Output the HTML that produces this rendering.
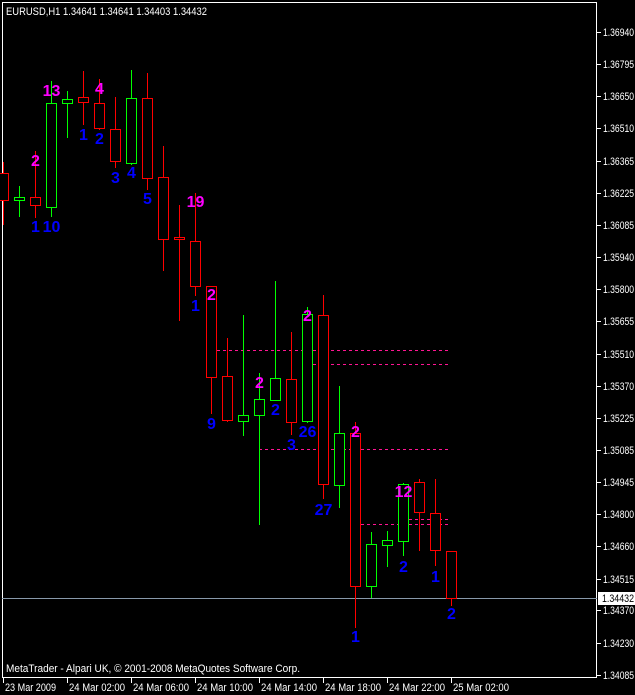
<!DOCTYPE html><html><head><style>body{margin:0;background:#000}svg{display:block}</style></head><body>
<svg width="635" height="695" xmlns="http://www.w3.org/2000/svg" font-family="Liberation Sans, sans-serif">
<rect width="635" height="695" fill="#000"/>
<rect x="2.5" y="2.5" width="594" height="675" fill="none" stroke="#fff"/>
<text x="6" y="15" fill="#fff" font-size="11" textLength="201" lengthAdjust="spacingAndGlyphs">EURUSD,H1  1.34641 1.34641 1.34403 1.34432</text>
<g stroke="#ff1493" stroke-dasharray="3,3" stroke-width="1">
<line x1="211" y1="350.5" x2="448" y2="350.5"/><line x1="307" y1="364.5" x2="448" y2="364.5"/>
<line x1="259" y1="449.5" x2="448" y2="449.5"/><line x1="403" y1="519.5" x2="448" y2="519.5"/>
<line x1="355" y1="524.5" x2="448" y2="524.5"/></g>
<line x1="2" y1="598.5" x2="597" y2="598.5" stroke="#8899aa"/>
<g fill="none" stroke-width="1" id="c"></g>
<g font-size="11" fill="#fff" id="ax"></g>
<g font-weight="bold" font-size="16" text-anchor="middle" id="lb"></g>
<rect x="598" y="592" width="37" height="13" fill="#fff"/>
<text x="602" y="602" font-size="11" fill="#000" textLength="32" lengthAdjust="spacingAndGlyphs">1.34432</text>
<text x="6" y="672" font-size="11" fill="#fff" textLength="294" lengthAdjust="spacingAndGlyphs">MetaTrader - Alpari UK, © 2001-2008 MetaQuotes Software Corp.</text>
<script>
var ns="http://www.w3.org/2000/svg";
function el(p,t,a,txt){var e=document.createElementNS(ns,t);for(var k in a)e.setAttribute(k,a[k]);if(txt)e.textContent=txt;p.appendChild(e);}
var c=document.getElementById('c');
var d=[[3,'r',173,200,162,225],[19,'g',197,200,186,217],[35,'r',197,205,151,218],[51,'g',103,207,81,217],[67,'g',99,103,91,138],[83,'r',97,102,71,125],[99,'r',103,128,79,130],[115,'r',129,161,97,168],[131,'g',98,163,70,165],[147,'r',98,178,73,190],[163,'r',177,239,146,271],[179,'r',237,239,205,321],[195,'r',241,286,193,296],[211,'r',286,377,286,414],[227,'r',376,420,338,422],[243,'g',415,421,315,436],[259,'g',399,415,373,525],[275,'g',378,400,281,400],[291,'r',379,422,332,435],[307,'g',314,421,307,423],[323,'r',315,484,295,499],[339,'g',433,485,386,508],[355,'r',433,586,422,628],[371,'g',544,586,532,598],[387,'g',540,545,531,567],[403,'g',484,541,483,556],[419,'r',482,512,479,551],[435,'r',513,550,479,566],[451,'r',551,598,551,606]];
d.forEach(function(k){var col=k[1]=='r'?'#ff0000':'#00ff00';
el(c,'line',{x1:k[0]+.5,x2:k[0]+.5,y1:k[4],y2:k[5],stroke:col});
el(c,'rect',{x:k[0]-4.5,y:k[2]+.5,width:10,height:Math.max(k[3]-k[2],1),fill:'#000',stroke:col});});
var lb=document.getElementById('lb');
var L=[[35,166,'2','m'],[35,232,'1','b'],[51,96,'13','m'],[51,232,'10','b'],[83,140,'1','b'],[99,94,'4','m'],[99,144,'2','b'],[115,183,'3','b'],[131,178,'4','b'],[147,204,'5','b'],[195,207,'19','m'],[195,311,'1','b'],[211,300,'2','m'],[211,429,'9','b'],[259,388,'2','m'],[275,415,'2','b'],[291,450,'3','b'],[307,321,'2','m'],[307,437,'26','b'],[323,515,'27','b'],[355,437,'2','m'],[355,642,'1','b'],[403,497,'12','m'],[403,572,'2','b'],[435,582,'1','b'],[451,619,'2','b']];
L.forEach(function(k){el(lb,'text',{x:k[0]+.5,y:k[1],fill:k[3]=='m'?'#ff00ff':'#0000ff'},k[2]);});
var ax=document.getElementById('ax');
var P=['1.36940','1.36795','1.36650','1.36510','1.36365','1.36225','1.36085','1.35940','1.35800','1.35655','1.35510','1.35370','1.35225','1.35085','1.34945','1.34800','1.34660','1.34515','1.34370','1.34230','1.34085'];
P.forEach(function(p,i){var y=Math.round(32+i*32.15);if(p=='1.34370')y=610;
el(ax,'line',{x1:597,x2:601,y1:y+.5,y2:y+.5,stroke:'#fff'});
el(ax,'text',{x:603,y:y+4,textLength:31,lengthAdjust:'spacingAndGlyphs'},p);});
var T=['23 Mar 2009','24 Mar 02:00','24 Mar 06:00','24 Mar 10:00','24 Mar 14:00','24 Mar 18:00','24 Mar 22:00','25 Mar 02:00'];
T.forEach(function(t,i){var x=3+i*64;el(ax,'line',{x1:x+.5,x2:x+.5,y1:678,y2:683,stroke:'#fff'});el(ax,'text',{x:x+2,y:691,textLength:i==0?51:56,lengthAdjust:'spacingAndGlyphs'},t);});
</script>
</svg></body></html>
